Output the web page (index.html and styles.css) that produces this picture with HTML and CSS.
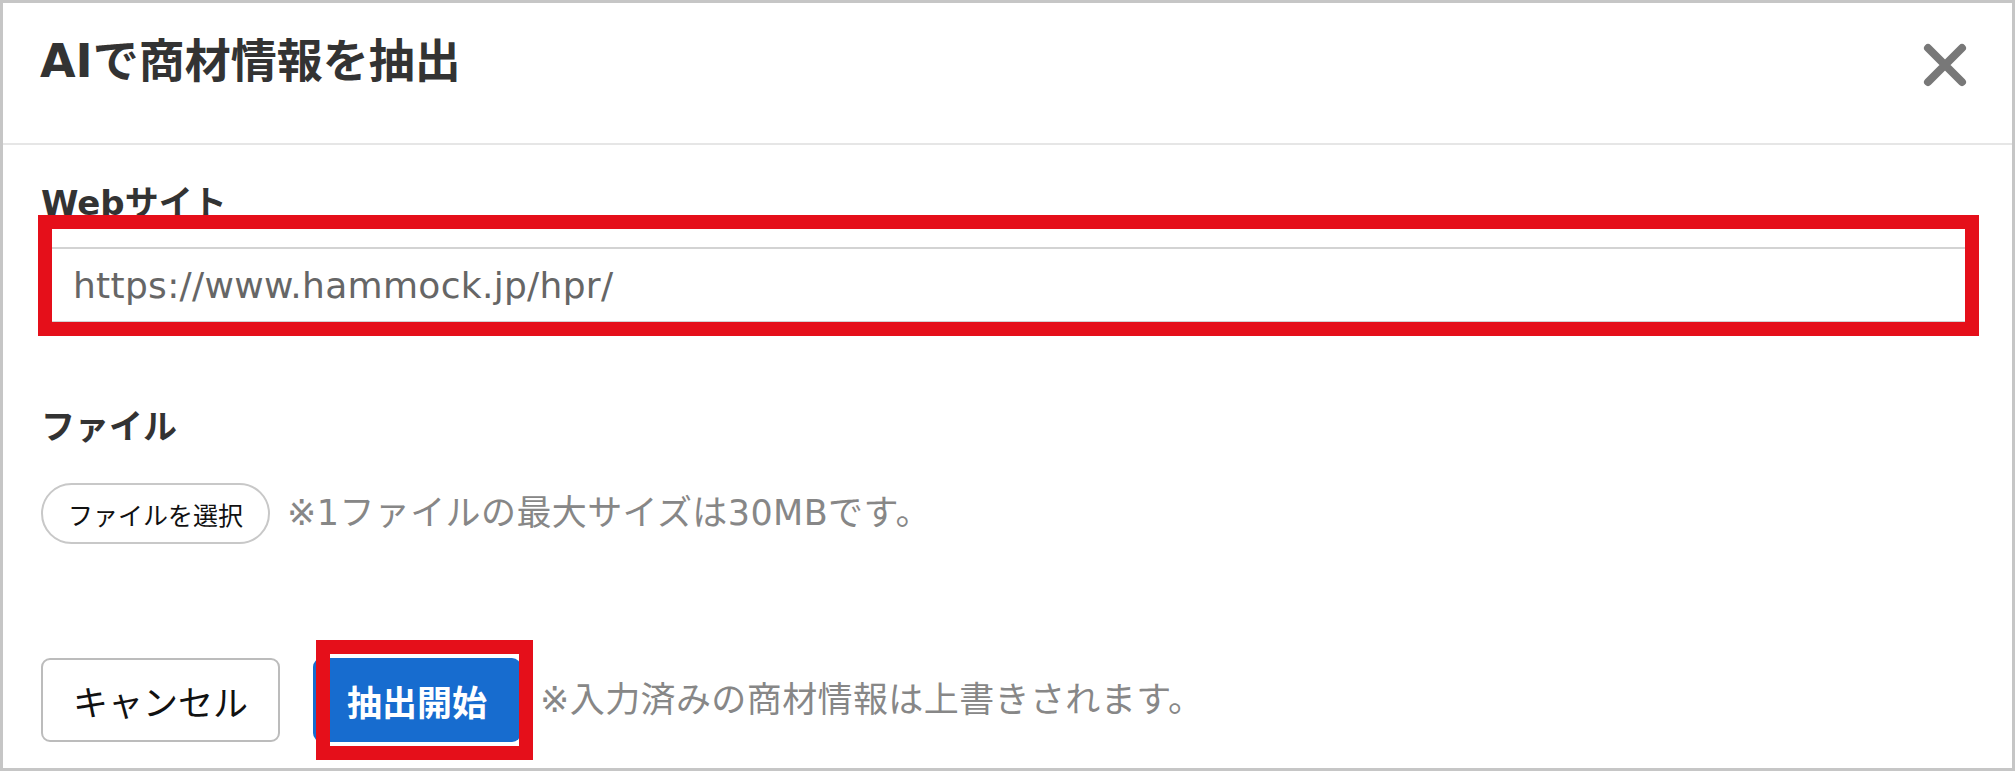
FILE: index.html
```html
<!DOCTYPE html>
<html lang="ja">
<head>
<meta charset="utf-8">
<title>AIで商材情報を抽出</title>
<link rel="stylesheet" href="styles.css">
</head>
<body>
<div class="dialog">
  <header class="dlg-head">
    <h1 class="dlg-title">AIで商材情報を抽出</h1>
    <button class="close" type="button" aria-label="閉じる">
      <svg width="44" height="44" viewBox="0 0 44 44" aria-hidden="true">
        <path d="M5 5 L39 39 M39 5 L5 39" stroke="#787878" stroke-width="8" stroke-linecap="round" fill="none"/>
      </svg>
    </button>
  </header>
  <div class="dlg-body">
    <section class="field">
      <label class="field-label" for="site">Webサイト</label>
      <div class="input-wrap">
        <input id="site" class="text-input" type="text" value="https://www.hammock.jp/hpr/">
        <span class="mark mark-input"></span>
      </div>
    </section>
    <section class="field field-file">
      <div class="field-label">ファイル</div>
      <div class="file-row">
        <span class="file-btn">ファイルを選択</span>
        <span class="hint">※1ファイルの最大サイズは30MBです。</span>
      </div>
    </section>
    <div class="actions">
      <button class="btn btn-cancel" type="button">キャンセル</button>
      <div class="btn-wrap">
        <button class="btn btn-primary" type="button">抽出開始</button>
        <span class="mark mark-btn"></span>
      </div>
      <span class="hint hint-action">※入力済みの商材情報は上書きされます。</span>
    </div>
  </div>
</div>
</body>
</html>
```
FILE: styles.css
```css
html, body {
  margin: 0;
  padding: 0;
  background: #ffffff;
}

body {
  font-family: "DejaVu Sans", "Noto Sans CJK JP", sans-serif;
  color: #333333;
}

.dialog {
  box-sizing: border-box;
  width: 2015px;
  height: 771px;
  border: 3px solid #c6c6c6;
  background: #ffffff;
}

.dlg-head {
  box-sizing: border-box;
  height: 142px;
  padding: 0 45px 25px 37px;
  border-bottom: 2px solid #e6e6e6;
  display: flex;
  align-items: center;
  justify-content: space-between;
}

.dlg-title {
  margin: 0;
  font-family: "DejaVu Sans", "Noto Sans CJK JP", sans-serif;
  font-weight: 700;
  font-size: 46px;
  line-height: 56px;
  color: #333333;
}

.close {
  margin: 8px 0 0 0;
  padding: 0;
  border: 0;
  background: transparent;
  width: 44px;
  height: 44px;
  display: block;
}

.close svg {
  display: block;
}

.dlg-body {
  padding: 38px 38px 0 38px;
}

.field-label {
  display: block;
  margin: 0;
  font-weight: 700;
  font-size: 34px;
  line-height: 41px;
  color: #333333;
}

.input-wrap {
  position: relative;
  margin-top: 23px;
}

.text-input {
  display: block;
  box-sizing: border-box;
  width: 100%;
  height: 76px;
  margin: 0;
  padding: 0 30px;
  border: 2px solid #d3d3d3;
  border-radius: 0;
  background: #ffffff;
  font-family: "DejaVu Sans", "Noto Sans CJK JP", sans-serif;
  font-size: 36px;
  letter-spacing: 0.3px;
  color: #666666;
  outline: none;
}

.mark {
  position: absolute;
  border: 14px solid #e50f1a;
  pointer-events: none;
}

.mark-input {
  top: -32px;
  bottom: -13px;
  left: -3px;
  right: -5px;
}

.field-file {
  margin-top: 84px;
}

.file-row {
  margin-top: 35px;
  display: flex;
  align-items: center;
  gap: 17px;
}

.file-btn {
  box-sizing: border-box;
  height: 61px;
  padding: 0 25px;
  border: 2px solid #c8c8c8;
  border-radius: 31px;
  display: inline-flex;
  align-items: center;
  font-family: "Noto Sans CJK JP", sans-serif;
  font-size: 25px;
  color: #111111;
}

.hint {
  font-size: 35px;
  line-height: 41px;
  letter-spacing: 0.4px;
  color: #878787;
}

.actions {
  margin-top: 114px;
  display: flex;
  align-items: center;
}

.btn {
  box-sizing: border-box;
  height: 84px;
  margin: 0;
  border-radius: 9px;
  font-family: "Noto Sans CJK JP", sans-serif;
  font-size: 35px;
  line-height: 1;
  cursor: pointer;
}

.btn-cancel {
  padding: 0 30px;
  border: 2px solid #bcbcbc;
  background: #ffffff;
  color: #111111;
  font-weight: 400;
}

.btn-wrap {
  position: relative;
  margin-left: 33px;
}

.btn-primary {
  display: block;
  padding: 0 34px;
  border: 0;
  background: #176ccf;
  color: #ffffff;
  font-weight: 700;
}

.mark-btn {
  top: -18px;
  bottom: -18px;
  left: 3px;
  right: -12px;
}

.hint-action {
  margin-left: 19px;
}
```
